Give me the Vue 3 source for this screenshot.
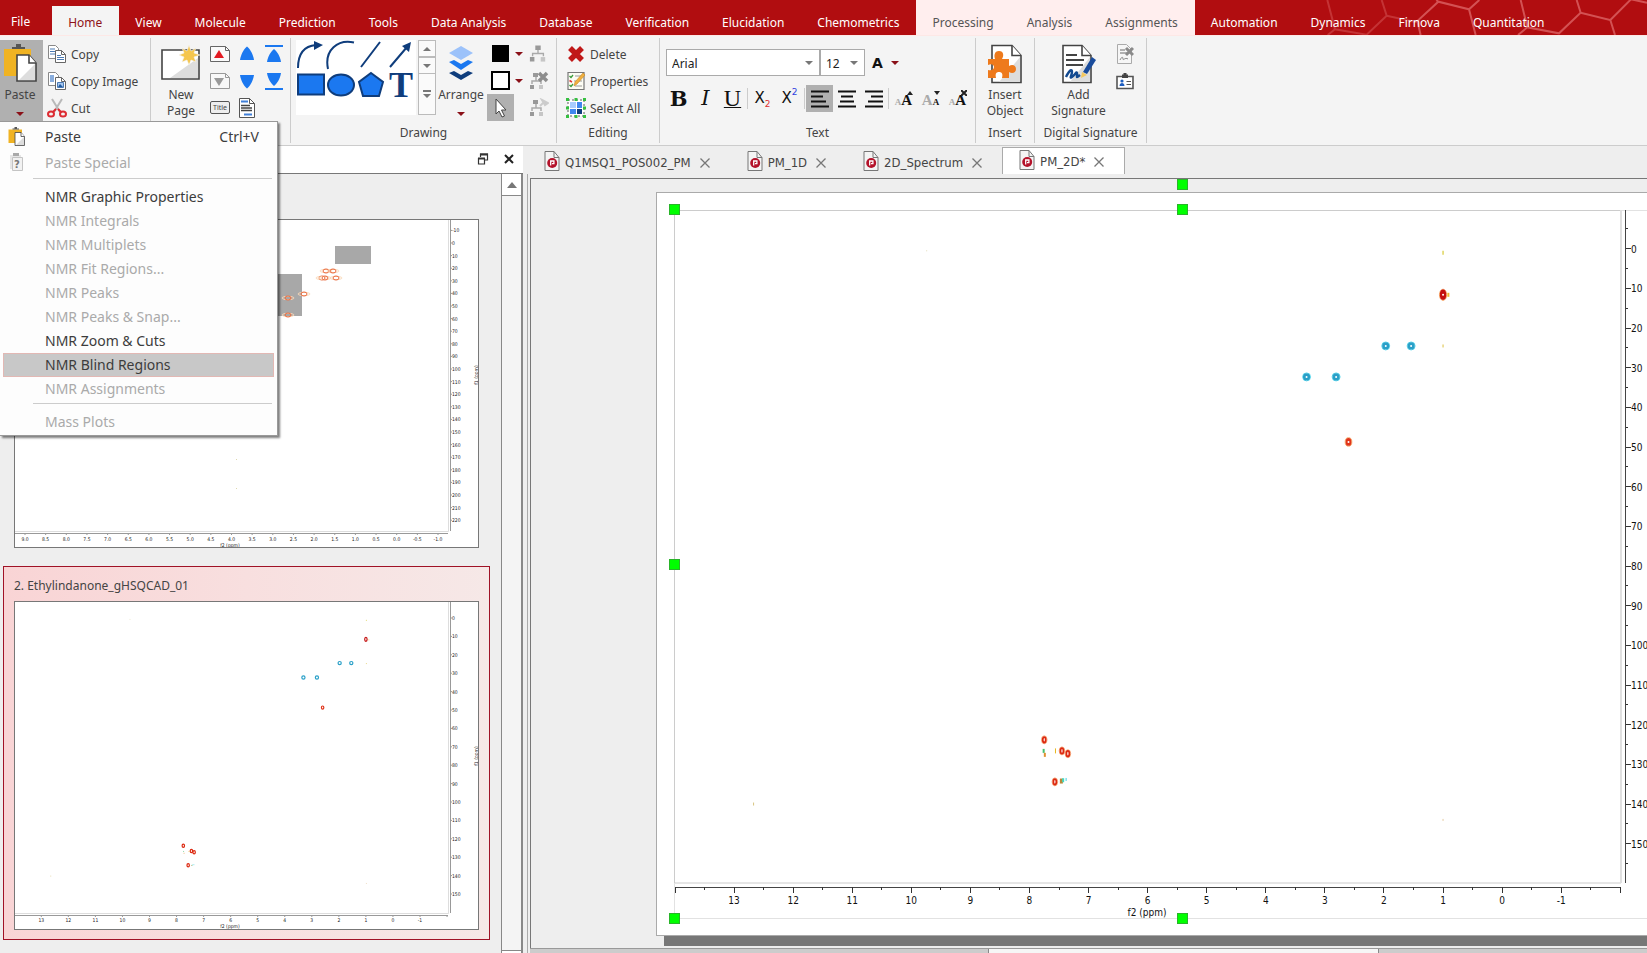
<script setup>
import { ref } from 'vue'

const mainTabs = [
  { name: 'File', kind: 'file' },
  { name: 'Home', kind: 'active' },
  { name: 'View' },
  { name: 'Molecule' },
  { name: 'Prediction' },
  { name: 'Tools' },
  { name: 'Data Analysis' },
  { name: 'Database' },
  { name: 'Verification' },
  { name: 'Elucidation' },
  { name: 'Chemometrics' },
  { name: 'Processing', kind: 'context' },
  { name: 'Analysis', kind: 'context' },
  { name: 'Assignments', kind: 'context' },
  { name: 'Automation' },
  { name: 'Dynamics' },
  { name: 'Firnova' },
  { name: 'Quantitation' },
]

const menu = [
  { name: 'Paste', key: 'Ctrl+V', icon: 'paste', on: true },
  { name: 'Paste Special', icon: 'special' },
  { line: true },
  { name: 'NMR Graphic Properties', on: true },
  { name: 'NMR Integrals' },
  { name: 'NMR Multiplets' },
  { name: 'NMR Fit Regions...' },
  { name: 'NMR Peaks' },
  { name: 'NMR Peaks & Snap...' },
  { name: 'NMR Zoom & Cuts', on: true },
  { name: 'NMR Blind Regions', on: true, hot: true },
  { name: 'NMR Assignments' },
  { line: true },
  { name: 'Mass Plots' },
]

const docs = ref([
  { name: 'Q1MSQ1_POS002_PM' },
  { name: 'PM_1D' },
  { name: '2D_Spectrum' },
  { name: 'PM_2D*', active: true },
])

const range = (from, to, step) => {
  const out = []
  for (let v = from; v <= to + 0.001; v += step) out.push(Math.round(v * 100) / 100)
  return out
}

// Peaks of the HSQC spectrum, in ppm: f2 across, f1 down.
const peaks = [
  { f2: 1.0, f1: 11.6, kind: 'strong' },
  { f2: 1.97, f1: 24.5, kind: 'neg' },
  { f2: 1.54, f1: 24.5, kind: 'neg' },
  { f2: 3.31, f1: 32.3, kind: 'neg' },
  { f2: 2.81, f1: 32.3, kind: 'neg' },
  { f2: 2.6, f1: 48.7, kind: 'pos' },
  { f2: 7.75, f1: 123.8, kind: 'open' },
  { f2: 7.45, f1: 126.6, kind: 'open' },
  { f2: 7.35, f1: 127.3, kind: 'open' },
  { f2: 7.57, f1: 134.4, kind: 'open' },
]
const specks = [
  { f2: 1.0, f1: 1, w: 1, h: 4, c: '#d0c010' },
  { f2: 0.91, f1: 11.6, w: 2, h: 4, c: '#f0b830' },
  { f2: 1.0, f1: 24.5, w: 1, h: 3, c: '#dcc040' },
  { f2: 7.76, f1: 126.6, w: 2, h: 4, c: '#48c070' },
  { f2: 7.74, f1: 127.6, w: 2, h: 4, c: '#e09030' },
  { f2: 7.56, f1: 126.6, w: 1, h: 5, c: '#e8b820' },
  { f2: 7.46, f1: 134.2, w: 3, h: 5, c: '#b88838' },
  { f2: 7.43, f1: 134.0, w: 2, h: 4, c: '#40d8c0' },
  { f2: 7.38, f1: 133.8, w: 1, h: 3, c: '#40d0e4' },
  { f2: 12.67, f1: 140, w: 1, h: 3, c: '#d8c480' },
  { f2: 1.0, f1: 144, w: 1, h: 2, c: '#e4c9a0' },
  { f2: 9.74, f1: 0.5, w: 1, h: 1, c: '#e2dcb8' },
]
const X = (p) => 18 + (14 - p) * 59.08
const Y = (p) => 55.8 + p * 39.66 / 10
// Centre of the device pixel that holds a coordinate, for crisp hairlines.
const snap = (v) => Math.floor(v) + 0.5
const tx = (p) => 27.3 + (13 - p) * 27.05
const ty = (p) => 17 + p * 1.84
const ux = (p) => 10 + (9 - p) * 41.3
const uy = (p) => 23 + p * 1.26

const radii = { strong: [2.6, 4.6], neg: [3, 3], pos: [2.3, 3.3], open: [1.8, 3] }
const hues = { strong: '#c41010', neg: '#2aa0c8', pos: '#e0341a', open: '#dc2810' }
const rims = { strong: '#f6a060', neg: '#60dcf0', pos: '#f8a868', open: '#f8b080' }

const handles = ['h-rot', 'h-nw', 'h-n', 'h-w', 'h-sw', 'h-s']
const font = ref('Arial')
const size = ref('12')
</script>

<template>
  <div class="app">
    <svg class="defs" width="0" height="0" aria-hidden="true">
      <defs>
        <symbol id="i-paste" viewBox="0 0 34 38">
          <path d="M1 5h27v27H1z" fill="#f0b323" />
          <path d="M9 5V3h4V0h5v3h4v2z" fill="#555" />
          <path d="M14 11h12l7 8v18H14z" fill="#fff" stroke="#444" stroke-width="1.6" />
          <path d="M32 20v16H16z" fill="#ddd" />
          <path d="M26 11v8h7" fill="#fff" stroke="#444" stroke-width="1.6" />
        </symbol>
        <symbol id="i-doc" viewBox="0 0 16 20">
          <path d="M1 .5h9l5 6v13H1z" fill="#f4f4f4" stroke="#777" />
          <path d="M10 .5v6h5" fill="none" stroke="#777" />
          <circle cx="8.200" cy="12" r="5" fill="#b4122a" />
          <path d="M6.700 14.600V10h3.200v2.600H8" fill="none" stroke="#fff" stroke-width="1.3" />
        </symbol>
        <symbol id="i-tree" viewBox="0 0 20 20">
          <path d="M7 1h6v5H7zM1 14h5v5H1z" fill="#999" />
          <path d="M13 14h5v5h-5z" fill="#c6c6c6" />
          <path d="M10 6v4M4 13v-3h12v3" fill="none" stroke="#aaa" stroke-width="1.500" />
        </symbol>
      </defs>
    </svg>

    <header class="titlebar">
      <svg class="hexes" viewBox="570 0 981 105" fill="none" stroke="#e87c7c" stroke-width="6" aria-hidden="true">
        <g opacity=".35"><path d="M592 0l23 88 95 16 60-57-15-47M615 88l-22 17M770 47l90 20" /></g>
        <g opacity=".62"><path d="M872 105l-10-42 63-58 92 23 31-28M925 5l-6-5M1017 28l20 77M1172 0l20 82 95 18 65-62-12-38M1192 82l-28 23M1352 38l89 22 14 45M1441 60l62-62 48 10" /></g>
      </svg>
      <nav class="tabs">
        <button v-for="t in mainTabs" :key="t.name" :class="['tab', t.kind]">{{ t.name }}</button>
      </nav>
    </header>

    <section class="ribbon">
      <div class="group g-clip">
        <div class="body">
          <button class="big paste">
            <span class="pic"><svg width="34" height="38"><use href="#i-paste" /></svg></span>
            <span>Paste</span>
            <i class="drop"></i>
          </button>
          <div class="stack">
            <button class="row">
              <svg width="20" height="20" viewBox="0 0 20 20"><path d="M1.500 1.500h7l3 3v10h-10z" fill="#fff" stroke="#888" /><path d="M3 5h5M3 7.500h5M3 10h5" stroke="#4a7ab5" /><path d="M8.500 6.500h6l4 4v8h-10z" fill="#fff" stroke="#666" /><path d="M14.500 6.500v4h4" fill="none" stroke="#666" /><path d="M10 11.500h4M10 13.500h7M10 15.500h7" stroke="#4a7ab5" /></svg>
              <span>Copy</span>
            </button>
            <button class="row">
              <svg width="20" height="20" viewBox="0 0 20 20"><path d="M1.500 1.500h7l3 3v10h-10z" fill="#fff" stroke="#888" /><path d="M3 4h4v7H3z" fill="#8aaede" /><path d="M8.500 6.500h6l4 4v8h-10z" fill="#fff" stroke="#666" /><path d="M14.500 6.500v4h4" fill="none" stroke="#666" /><path d="M10.500 11.500h6v5h-6z" fill="#a8c8f0" stroke="#4a7ab5" /><path d="M11 16l2-3 3 3z" fill="#1f5aa0" /></svg>
              <span>Copy Image</span>
            </button>
            <button class="row">
              <svg width="20" height="20" viewBox="0 0 20 20" fill="none"><path d="M5 1l8 13M15 1L7 14" stroke="#b9b9b9" stroke-width="2" /><ellipse cx="4" cy="16" rx="3" ry="2.600" stroke="#dd2c33" stroke-width="2" /><ellipse cx="16" cy="16" rx="3" ry="2.600" stroke="#dd2c33" stroke-width="2" /><path d="M6 14l3-3M14 14l-3-3" stroke="#dd2c33" stroke-width="2" /></svg>
              <span>Cut</span>
            </button>
          </div>
        </div>
        <div class="label"></div>
      </div>

      <div class="group g-pages">
        <div class="body">
          <button class="big newpage">
            <span class="pic">
              <svg width="40" height="38" viewBox="0 0 40 38"><path d="M1 6h37v29H1z" fill="#fff" stroke="#444" stroke-width="1.600" /><path d="M37 14v20H9z" fill="#ddd" /><path d="M28 1l2 6 5-3-2 5 6 2-6 2 2 5-5-2-2 5-2-5-5 2 2-5-5-2 5-2-2-5 5 3z" fill="#f5c64e" stroke="#f4f4f4" stroke-width=".6" /></svg>
            </span>
            <span>New<br />Page</span>
          </button>
          <div class="pagegrid">
            <button aria-label="Page up"><svg width="20" height="18" viewBox="0 0 20 18"><path d="M.5 1.500h15l4 4v11H.5z" fill="#fafafa" stroke="#666" /><path d="M15.500 1.500v4h4" fill="none" stroke="#666" /><path d="M4 13L9 5l5 8z" fill="#e31b23" /></svg></button>
            <button aria-label="Move up"><svg width="18" height="18" viewBox="0 0 18 18"><path d="M9 1.500C11 3 15 8 16 15H2C3 8 7 3 9 1.500z" fill="#1b78f0" /></svg></button>
            <button aria-label="Move to top"><svg width="18" height="18" viewBox="0 0 18 18"><path d="M0 1h18" stroke="#1b78f0" stroke-width="2" /><path d="M9 4c2 1.500 6 6 7 13H2C3 10 7 5.500 9 4z" fill="#1b78f0" /></svg></button>
            <button aria-label="Page down"><svg width="20" height="18" viewBox="0 0 20 18"><path d="M.5 1.500h15l4 4v11H.5z" fill="#f8f8f8" stroke="#999" /><path d="M15.500 1.500v4h4" fill="none" stroke="#999" /><path d="M4 6l5 8 5-8z" fill="#999" /></svg></button>
            <button aria-label="Move down"><svg width="18" height="18" viewBox="0 0 18 18"><path d="M9 16.500C11 15 15 10 16 3H2c1 7 5 12 7 13.500z" fill="#1b78f0" /></svg></button>
            <button aria-label="Move to bottom"><svg width="18" height="18" viewBox="0 0 18 18"><path d="M0 17h18" stroke="#1b78f0" stroke-width="2" /><path d="M9 14c2-1.500 6-6 7-13H2c1 7 5 11.500 7 13z" fill="#1b78f0" /></svg></button>
            <button aria-label="Page title" class="titlebtn">Title</button>
            <button aria-label="Header and footer"><svg width="18" height="20" viewBox="0 0 18 20"><path d="M1.500.5h10l5 5v14h-15z" fill="#fff" stroke="#555" /><path d="M11.500.5v5h5" fill="none" stroke="#555" /><path d="M3 3.500h7M6 16.500h8" stroke="#3f7fd8" stroke-width="2" /><path d="M3 7.500h9M3 10h11M3 12.500h11" stroke="#444" stroke-width="1.300" /></svg></button>
          </div>
        </div>
        <div class="label"></div>
      </div>

      <div class="group g-draw">
        <div class="body">
          <svg class="gallery" width="120" height="75" viewBox="0 0 120 75" aria-label="Shapes">
            <path d="M0 0h120v75H0z" fill="#fff" />
            <g fill="none" stroke="#0f3d7c" stroke-width="2"><path d="M2 28C2 14 8 6 20 5M32 29C28 10 42-1 58 2.500M65 27L84 2M94 27l17-20" /></g>
            <path d="M18 1l9 4-9 5zM115 2l-2 10-7-6z" fill="#0f3d7c" />
            <g fill="#1b78f0" stroke="#0f3d7c" stroke-width="2"><path d="M2 34.500h26v20H2z" /><ellipse cx="45" cy="45" rx="13" ry="10.500" /><path d="M75 33l12 9-4 14H67l-4-14z" /></g>
            <text x="105" y="57" class="glyph-t" text-anchor="middle">T</text>
          </svg>
          <div class="gscroll">
            <button aria-label="Scroll up"><i class="tri up"></i></button>
            <button aria-label="Scroll down"><i class="tri"></i></button>
            <button aria-label="More shapes" class="more"><i class="dash"></i><i class="tri"></i></button>
          </div>
          <button class="big arrange">
            <span class="pic"><svg width="26" height="38" viewBox="0 0 26 38"><path d="M1 9l12-7 12 7-12 7z" fill="#9cc2fa" /><path d="M1 18l5-2 7 4 7-4 5 2-12 8z" fill="#1b78f0" /><path d="M1 29l5-2 7 4 7-4 5 2-12 7z" fill="#0f3d7c" /></svg></span>
            <span>Arrange</span>
            <i class="drop"></i>
          </button>
          <div class="colours">
            <button aria-label="Fill colour"><b class="sw fill"></b><i class="drop"></i></button>
            <button aria-label="Line colour"><b class="sw line"></b><i class="drop"></i></button>
            <button aria-label="Select" class="pointer"><svg width="14" height="20" viewBox="0 0 14 20"><path d="M2 1v15l3-3 3 6 2.500-1-3-6H12z" fill="#fff" stroke="#444" /></svg></button>
          </div>
          <div class="stack trees">
            <button aria-label="Group"><svg width="18" height="19"><use href="#i-tree" /></svg></button>
            <button aria-label="Ungroup"><svg width="20" height="20" viewBox="0 0 20 20"><path d="M4 2h5v4H4zM1 14h4v4H1z" fill="#999" /><path d="M10 14h4v4h-4z" fill="#c6c6c6" /><path d="M7 6v4M3 13v-3h9v3" fill="none" stroke="#aaa" stroke-width="1.500" /><path d="M10 2l8 8M18 2l-8 8" stroke="#8d8d8d" stroke-width="3.500" /></svg></button>
            <button aria-label="Edit group"><svg width="20" height="20" viewBox="0 0 20 20"><path d="M4 2h5v4H4zM1 14h4v4H1z" fill="#999" /><path d="M10 14h4v4h-4z" fill="#c6c6c6" /><path d="M7 6v4M3 13v-3h9v3" fill="none" stroke="#aaa" stroke-width="1.500" /><path d="M11 8l4-4M13 2l6 3-3 2z" stroke="#ccc" stroke-width="2" fill="#ccc" /></svg></button>
          </div>
        </div>
        <div class="label">Drawing</div>
      </div>

      <div class="group g-edit">
        <div class="body">
          <div class="stack">
            <button class="row"><svg width="20" height="20" viewBox="0 0 20 20"><path d="M4 4l12 12M16 4L4 16" stroke="#c01818" stroke-width="5.500" /></svg><span>Delete</span></button>
            <button class="row"><svg width="20" height="20" viewBox="0 0 20 20"><path d="M2 1.500h16v17H2z" fill="#fcfcf4" stroke="#777" stroke-width="1.200" /><path d="M3.500 5l1.500 1.500L7 4M3.500 14l1.500 1.500L7 13" stroke="#3a9c3a" fill="none" stroke-width="1.300" /><path d="M3.500 9.500L6 11" stroke="#d33" stroke-width="1.500" /><path d="M9 5h7M8 10h8M9 15h7" stroke="#999" /><path d="M8 15l1-4 8-9 2 2-8 9z" fill="#f0b040" stroke="#c98a20" stroke-width=".6" /></svg><span>Properties</span></button>
            <button class="row"><svg width="20" height="20" viewBox="0 0 20 20"><path d="M2 2h16v16H2z" fill="#fff" stroke="#5a5a5a" stroke-dasharray="2 2" /><g fill="#35c040"><path d="M0 0h3v3H0zM17 0h3v3h-3zM0 17h3v3H0zM17 17h3v3h-3zM8.500 0h3v3h-3zM8.500 17h3v3h-3zM0 8.500h3v3H0zM17 8.500h3v3h-3z" /></g><path d="M4 4h6v6H4z" fill="#a8ccff" /><path d="M11 4h5v6h-5zM4 11h6v5H4z" fill="#3f87ee" /><path d="M11 11h5v5h-5z" fill="#0f3d7c" /></svg><span>Select All</span></button>
          </div>
        </div>
        <div class="label">Editing</div>
      </div>

      <div class="group g-text">
        <div class="body textbody">
          <div class="fontrow">
            <label class="pick family"><select v-model="font" aria-label="Font"><option>Arial</option></select><i class="tri"></i></label>
            <label class="pick pts"><select v-model="size" aria-label="Font size"><option>12</option></select><i class="tri"></i></label>
            <button class="fontcolour" aria-label="Font colour"><b>A</b><i class="drop"></i></button>
          </div>
          <div class="fmtrow">
            <button class="f bold" aria-label="Bold">B</button>
            <button class="f ital" aria-label="Italic">I</button>
            <button class="f und" aria-label="Underline">U</button>
            <i class="bar"></i>
            <button class="f subs" aria-label="Subscript">X<sub>2</sub></button>
            <button class="f sups" aria-label="Superscript">X<sup>2</sup></button>
            <i class="bar"></i>
            <button class="f on" aria-label="Align left"><svg width="18" height="18" viewBox="0 0 18 18"><path d="M0 1.500h18M0 6.500h12M0 11.500h15M0 16.500h18" stroke="#111" stroke-width="2.200" /></svg></button>
            <button class="f" aria-label="Align centre"><svg width="18" height="18" viewBox="0 0 18 18"><path d="M0 1.500h18M3 6.500h12M2 11.500h14M0 16.500h18" stroke="#111" stroke-width="2.200" /></svg></button>
            <button class="f" aria-label="Align right"><svg width="18" height="18" viewBox="0 0 18 18"><path d="M0 1.500h18M6 6.500h12M3 11.500h15M0 16.500h18" stroke="#111" stroke-width="2.200" /></svg></button>
            <i class="bar"></i>
            <button class="f aa" aria-label="Grow font"><span class="dim small">A</span><span class="large">A</span><svg width="6" height="6" viewBox="0 0 6 6"><path d="M0 5l3-4 3 4z" fill="#222" /></svg></button>
            <button class="f aa" aria-label="Shrink font"><span class="dim large">A</span><span class="small">A</span><svg width="6" height="6" viewBox="0 0 6 6"><path d="M0 1l3 4 3-4z" fill="#222" /></svg></button>
            <button class="f aa" aria-label="Reset font"><span class="dim small">A</span><span class="large">A</span><svg width="6" height="6" viewBox="0 0 6 6"><path d="M0 0l6 6M6 0L0 6" stroke="#222" stroke-width="2" /></svg></button>
          </div>
        </div>
        <div class="label">Text</div>
      </div>

      <div class="group g-insert">
        <div class="body">
          <button class="big">
            <span class="pic"><svg width="36" height="40" viewBox="0 0 36 40"><path d="M5 1.500h20l9 10v27H5z" fill="#fff" stroke="#444" stroke-width="1.600" /><path d="M33 13v25H12z" fill="#ddd" /><path d="M25 1.500v10h9" fill="#fff" stroke="#444" stroke-width="1.600" /><path d="M1 15h7c-1-3-1-8 4-8s5 5 3 8h7v7c3-2 7-1 7 3s-4 5-7 3v6h-7c1-4 0-6-3-6s-4 2-3 6H1v-8c4 1 6-1 6-3s-2-4-6-2z" fill="#ee7a1c" /></svg></span>
            <span>Insert<br />Object</span>
          </button>
        </div>
        <div class="label">Insert</div>
      </div>

      <div class="group g-sign">
        <div class="body">
          <button class="big">
            <span class="pic"><svg width="36" height="40" viewBox="0 0 36 40"><path d="M2 1.500h19l9 10v27H2z" fill="#fff" stroke="#444" stroke-width="1.600" /><path d="M29 13v25H9z" fill="#ddd" /><path d="M21 1.500v10h9" fill="#fff" stroke="#444" stroke-width="1.600" /><path d="M5 11h11M5 16h18M5 21h17" stroke="#444" stroke-width="2" /><path d="M5 33c4-8 6-8 6-5s-3 7 0 5 5-7 5-3-1 4 3 1" fill="none" stroke="#134a90" stroke-width="2.400" /><path d="M22 28l9-15 4 3-9 14z" fill="#1a4c9c" /><path d="M20 34l1-6 5 3z" fill="#f4c860" /></svg></span>
            <span>Add<br />Signature</span>
          </button>
          <div class="stack signs">
            <button aria-label="Remove signature"><svg width="18" height="20" viewBox="0 0 18 20"><path d="M1.500.5h9l5 5v14h-14z" fill="#f6f6f6" stroke="#aaa" /><path d="M4 6h5M4 9h7" stroke="#999" stroke-width="1.500" /><path d="M4 16c2-4 3-3 3-1s2-2 5 0" fill="none" stroke="#888" /><path d="M10 4l7 7M17 4l-7 7" stroke="#8a8a8a" stroke-width="3" /></svg></button>
            <button aria-label="Signature details"><svg width="18" height="18" viewBox="0 0 18 18"><path d="M1 4.500h16v12H1z" fill="#fff" stroke="#555" stroke-width="1.600" /><path d="M6 6V2.500h1.500V1h3v1.500H12V6z" fill="#444" /><circle cx="6" cy="9" r="1.600" fill="#1f5fc0" /><path d="M3.500 14c0-4 5-4 5 0z" fill="#1f5fc0" /><path d="M10.500 9.500H15M10.500 12.500H15" stroke="#555" /></svg></button>
          </div>
        </div>
        <div class="label">Digital Signature</div>
      </div>
    </section>

    <main class="work">
      <aside class="pages">
        <div class="phead">
          <button aria-label="Float panel"><svg width="12" height="12" viewBox="0 0 12 12" fill="none" stroke="#333"><path d="M3.500 4V1h7v6H8" stroke-width="1.200" /><path d="M3 1.500h8M1 5.500h7" stroke-width="2.200" /><path d="M1.500 5v6h6V5" stroke-width="1.200" /></svg></button>
          <button aria-label="Close panel"><svg width="12" height="12" viewBox="0 0 12 12"><path d="M2 2l8 8M10 2l-8 8" stroke="#222" stroke-width="2" /></svg></button>
        </div>
        <div class="plist">
          <div class="cards">
            <article class="card">
              <h3></h3>
              <svg class="thumb" viewBox="0 0 463 327">
                <g fill="#a8a8a8"><path d="M320 26h36v18h-36zM240 54h47v42h-47z" /></g>
                <g fill="none" stroke="#ea6a3e">
                  <g v-for="(p, i) in [[311,51],[318,51],[307,58],[310,58],[321,58],[289,74],[273,78],[273,95]]" :key="i">
                    <ellipse :cx="p[0]" :cy="p[1]" rx="6" ry="1.600" stroke="#fbd9b8" />
                    <ellipse :cx="p[0]" :cy="p[1]" rx="3" ry="2" />
                  </g>
                </g>
                <path d="M221 239h1v1h-1zM221 268h1v1h-1z" fill="#ddd8ae" />
                <path class="soft" d="M433.500 0v311.500H0" />
                <path class="ax" d="M435.500 0v311M0 313.500h433" />
                <g v-for="v in range(-10, 225, 5)" :key="'y' + v">
                  <path class="ax" :d="`M435 ${uy(v)}h${v % 10 ? 1 : 2}`" />
                  <text v-if="v % 10 === 0" class="tiny" x="437" :y="uy(v) + 2">{{ v }}</text>
                </g>
                <g v-for="v in range(-1, 9, 0.5)" :key="'x' + v">
                  <path class="ax" :d="`M${ux(v)} 313v2`" />
                  <text class="tiny" text-anchor="middle" :x="ux(v)" y="321">{{ v.toFixed(1) }}</text>
                </g>
                <text class="tiny" text-anchor="middle" x="215" y="327">f2 (ppm)</text>
                <text class="tiny" text-anchor="middle" transform="translate(463 155) rotate(-90)">f1 (ppm)</text>
              </svg>
            </article>
            <article class="card sel">
              <h3>2. Ethylindanone_gHSQCAD_01</h3>
              <svg class="thumb" viewBox="0 0 463 327">
                <ellipse v-for="(p, i) in peaks" :key="i" :cx="tx(p.f2) - 1" :cy="ty(p.f1) - 1" :rx="p.kind === 'neg' ? 1.6 : 1.2" :ry="p.kind === 'strong' ? 2 : 1.6" fill="none" :stroke="hues[p.kind]" stroke-width="1.2" />
                <rect v-for="(s, i) in specks" :key="'s' + i" :x="tx(s.f2) - 1" :y="ty(s.f1) - 1" width="1" height="1" :fill="s.c" opacity=".6" />
                <path class="soft" d="M433.500 0v311.500H0" />
                <path class="ax" d="M435.500 0v311M0 313.500h433" />
                <g v-for="v in range(-5, 155, 5)" :key="'y' + v">
                  <path class="ax" :d="`M435 ${ty(v) - 1}h${v % 10 ? 1 : 2}`" />
                  <text v-if="v % 10 === 0" class="tiny" x="437" :y="ty(v) + 1">{{ v }}</text>
                </g>
                <g v-for="v in range(-2, 13.5, 0.5)" :key="'x' + v">
                  <path class="ax" :d="`M${tx(v) - 1} 313v${v % 1 ? 1 : 2}`" />
                  <text v-if="v % 1 === 0 && v > -2" class="tiny" text-anchor="middle" :x="tx(v) - 1" y="320">{{ v }}</text>
                </g>
                <text class="tiny" text-anchor="middle" x="215" y="326">f2 (ppm)</text>
                <text class="tiny" text-anchor="middle" transform="translate(463 154) rotate(-90)">f1 (ppm)</text>
              </svg>
            </article>
          </div>
          <div class="vbar">
            <button aria-label="Scroll pages up"><i class="tri up"></i></button>
            <div class="track"></div>
            <div class="foot"></div>
          </div>
        </div>
      </aside>
      <div class="splitter"></div>

      <section class="docs">
        <div class="doctabs">
          <div v-for="d in docs" :key="d.name" :class="['doctab', { active: d.active }]">
            <svg width="16" height="20"><use href="#i-doc" /></svg>
            <span>{{ d.name }}</span>
            <button :aria-label="'Close ' + d.name"><svg width="10" height="10" viewBox="0 0 10 10"><path d="M.5.5l9 9M9.500.5l-9 9" stroke="#777" stroke-width="1.300" /></svg></button>
          </div>
        </div>
        <div class="canvas">
          <div class="sheet">
            <svg class="plot" width="1020" height="742" viewBox="0 0 1020 742">
              <path class="frame" d="M17.500 17.500h946.500v672.500H17.500z" />
              <path class="frame pale" d="M17.500 690v35.500H1020M964 17.500h56" />
              <path class="edge" d="M964 17v673" />
              <path class="axis" d="M18 694.500h946M968.500 17v673" />
              <g v-for="v in range(-2, 14, 0.5)" :key="'x' + v">
                <path class="tick" :d="`M${snap(X(v))} 694v${v % 1 ? 3 : 6}`" />
                <text v-if="v % 1 === 0 && v > -2 && v < 14" text-anchor="middle" :x="X(v)" y="711">{{ v }}</text>
              </g>
              <g v-for="v in range(-5, 155, 5)" :key="'y' + v">
                <path class="tick" :d="`M969 ${snap(Y(v))}h${v % 10 ? 2 : 5}`" />
                <text v-if="v % 10 === 0" x="974" :y="Y(v) + 4">{{ v }}</text>
              </g>
              <text text-anchor="middle" x="490" y="723">f2 (ppm)</text>
              <g v-for="(p, i) in peaks" :key="'p' + i">
                <ellipse :cx="X(p.f2)" :cy="Y(p.f1)" :rx="radii[p.kind][0] + 1" :ry="radii[p.kind][1] + 1" fill="none" :stroke="rims[p.kind]" stroke-width="1" />
                <ellipse :cx="X(p.f2)" :cy="Y(p.f1)" :rx="radii[p.kind][0] - 0.3" :ry="radii[p.kind][1] - 0.3" :fill="p.kind === 'open' ? '#fff' : hues[p.kind]" :stroke="hues[p.kind]" stroke-width="1.8" />
                <circle v-if="p.kind !== 'open'" :cx="X(p.f2)" :cy="Y(p.f1)" r="1" fill="#fff" />
              </g>
              <rect v-for="(s, i) in specks" :key="'s' + i" :x="X(s.f2) - s.w / 2" :y="Y(s.f1) - s.h / 2" :width="s.w" :height="s.h" :fill="s.c" />
            </svg>
            <i v-for="h in handles" :key="h" :class="['handle', h]"></i>
          </div>
          <div class="shade"></div>
        </div>
        <div class="hbar"><div class="thumbbar"></div></div>
      </section>
    </main>

    <div class="menu" role="menu">
      <template v-for="(m, i) in menu" :key="i">
        <hr v-if="m.line" />
        <button v-else role="menuitem" :class="['item', { off: !m.on, hot: m.hot, tall: m.icon }]">
          <svg v-if="m.icon === 'paste'" class="mi" width="17" height="19"><use href="#i-paste" /></svg>
          <svg v-else-if="m.icon" class="mi" width="17" height="19" viewBox="0 0 17 19"><path d="M2 2h11v14H2z" fill="#e6e6e6" /><path d="M5 0h6v3H5z" fill="#aaa" /><path d="M4.500 4.500h10v13h-10z" fill="#f2f2f2" stroke="#c4c4c4" /><text x="9" y="15" text-anchor="middle" class="q">?</text></svg>
          <span>{{ m.name }}</span>
          <kbd v-if="m.key">{{ m.key }}</kbd>
        </button>
      </template>
    </div>
  </div>
</template>

<style>
html, body { background: #eee; overflow: hidden; }
</style>

<style scoped>
.app {
  position: relative; height: 100vh; display: flex; flex-direction: column; overflow: hidden;
  font: 12px/16px "Noto Sans", "Open Sans", sans-serif; color: #444; background: #eee;
}
.app *, .app *::before { box-sizing: border-box; }
.defs { position: absolute; }
button { font: inherit; color: inherit; background: none; border: 0; padding: 0; margin: 0; }
svg { display: block; flex: none; }

.titlebar { position: relative; height: 35px; flex: none; background: #b10d10; overflow: hidden; }
.hexes { position: absolute; right: 0; top: 0; width: 327px; height: 35px; }
.tabs { position: relative; display: flex; height: 35px; }
.tab { flex: none; padding: 11px 17px 0 16px; color: #fff; white-space: nowrap; }
.tab.file { padding: 8px 22px 0 11px; }
.tab.active { margin-top: 6px; padding-top: 5px; background: #f4f4f4; color: #8e1218; }
.tab.context { background: #ffeeee; color: #555; }

.ribbon { display: flex; flex: none; height: 111px; background: #f4f4f4; border-top: 1px solid #fde8e6; border-bottom: 1px solid #ccc; }
.group { flex: none; margin: 2px 0; border-right: 1px solid #ccc; display: flex; flex-direction: column; }
.body { flex: 1; display: flex; padding-top: 2px; }
.label { height: 22px; line-height: 24px; text-align: center; white-space: nowrap; }
.g-clip { width: 151px; }
.g-pages { width: 140px; }
.g-draw { width: 266px; }
.g-edit { width: 103px; }
.g-text { width: 316px; }
.g-insert { width: 59px; }
.g-sign { width: 112px; }

.big { display: flex; flex-direction: column; align-items: center; height: 81px; text-align: center; }
.big .pic { height: 47px; padding-top: 4px; }
.big .drop { margin-top: 9px; }
.paste { width: 43px; background: #b0b0b0; padding-right: 3px; }
.newpage { width: 50px; margin-left: 5px; }
.drop { width: 0; height: 0; border: 4px solid transparent; border-top-color: #8a1018; border-bottom: 0; }
.tri { width: 0; height: 0; border: 4px solid transparent; border-top-color: #777; border-bottom: 0; }
.tri.up { border: 4px solid transparent; border-bottom-color: #777; border-top: 0; }

.stack { display: flex; flex-direction: column; }
.stack button { height: 27px; display: flex; align-items: center; gap: 4px; white-space: nowrap; }
.row span { padding-top: 2px; }
.g-clip .stack { padding-left: 4px; }
.g-edit .stack { padding-left: 9px; }

.pagegrid { display: grid; grid-template-columns: 27px 27px 27px; grid-auto-rows: 27px; }
.pagegrid button { display: flex; align-items: center; justify-content: center; }
.pagegrid .titlebtn { width: 20px; height: 13px; margin: 7px 0 0 4px; border: 1px solid #555; border-radius: 2px; background: #eee; font-size: 7px; line-height: 10px; }

.gallery { margin-left: 5px; }
.glyph-t { font: bold 36px "Liberation Serif", serif; fill: #0f3d7c; }
.gscroll { width: 18px; height: 75px; margin-left: 2px; display: flex; flex-direction: column; }
.gscroll button { height: 17px; border: 1px solid #bbb; background: #fafafa; display: flex; flex-direction: column; align-items: center; justify-content: center; gap: 2px; }
.gscroll .more { flex: 1; border-top: 0; }
.dash { width: 8px; height: 2px; background: #777; }
.arrange { width: 50px; }
.colours { width: 41px; margin-left: 1px; }
.colours button { height: 27px; display: flex; align-items: center; padding-left: 4px; gap: 5px; }
.colours .pointer { width: 27px; background: #b0b0b0; padding-left: 7px; }
.sw { width: 19px; height: 19px; border: 2px solid #000; background: #fff; }
.sw.fill { background: #000; width: 17px; height: 17px; margin: 0 1px; }
.trees { padding-left: 1px; }

.textbody { flex-direction: column; }
.fontrow { display: flex; padding: 9px 0 0 6px; height: 45px; }
.pick { position: relative; height: 27px; border: 1px solid #aaa; background: #fff; }
.pick select { width: 100%; height: 27px; padding: 0 5px; border: 0; appearance: none; background: none; font: inherit; color: #222; }
.pick .tri { position: absolute; right: 6px; top: 11px; }
.family { width: 154px; }
.pts { width: 45px; }
.fontcolour { display: flex; align-items: center; gap: 8px; height: 27px; padding-left: 7px; }
.fontcolour b { font: bold 14px/16px "DejaVu Sans", sans-serif; color: #111; }
.fmtrow { display: flex; height: 27px; padding-left: 5px; align-items: center; }
.f { width: 27px; height: 27px; display: flex; align-items: center; justify-content: center; color: #111; }
.bold, .ital { font: 21px/27px "DejaVu Serif", serif; }
.und { font: 24px/27px "Liberation Serif", serif; }
.bold { font-weight: bold; }
.ital { font-style: italic; }
.und { text-decoration: underline; text-decoration-thickness: 1px; }
.subs, .sups { font: 15px/27px "DejaVu Sans", sans-serif; }
.subs sub, .sups sup { font-size: 9px; line-height: 9px; }
.subs sub { color: #e03030; align-self: flex-end; margin-bottom: 3px; }
.sups sup { color: #3040e0; align-self: flex-start; margin-top: 3px; }
.f.on { background: #b0b0b0; }
.bar { width: 1px; height: 21px; margin: 0 1px; background: #ccc; }
.aa { font: bold 14px/16px "Liberation Serif", serif; position: relative; align-items: baseline; padding-top: 7px; }
.aa .small { font-size: 9px; }
.aa .large { font-size: 15px; }
.aa .dim { color: #aaa; }
.aa svg { position: absolute; right: 4px; top: 5px; }

.g-insert .big { width: 58px; }
.g-sign .big { width: 75px; margin-left: 6px; }

.work { flex: 1; min-height: 0; display: flex; }
.pages { flex: none; width: 523px; display: flex; flex-direction: column; }
.phead { height: 28px; background: #fff; border-bottom: 1px solid #777; display: flex; justify-content: flex-end; align-items: center; gap: 14px; padding: 0 8px 2px 0; }
.plist { flex: 1; min-height: 0; display: flex; border-right: 2px solid #888; }
.cards { flex: 1; padding: 10px 11px 0 3px; display: flex; flex-direction: column; gap: 8px; overflow: hidden; }
.card { flex: none; border: 1px solid transparent; padding: 0 10px 9px; }
.card.sel { border-color: #a01226; background: linear-gradient(90deg, #f9d4d5, #f8dfdf 50%, #f6e8e7); }
.card h3 { margin: 0; height: 34px; padding-top: 5px; font: 12px/28px "Noto Sans", sans-serif; color: #444; }
.thumb { width: 100%; height: auto; background: #fff; border: 1px solid #777; }
.soft { fill: none; stroke: #ddd; }
.ax { fill: none; stroke: #999; }
.tiny { font: 5px "DejaVu Sans Condensed", "DejaVu Sans", sans-serif; fill: #222; }
.vbar { width: 20px; border-left: 1px solid #888; display: flex; flex-direction: column; background: #f4f4f4; }
.vbar button { height: 22px; border-bottom: 1px solid #888; background: #fff; display: flex; align-items: center; justify-content: center; }
.vbar .tri.up { border-width: 0 5px 6px; }
.track { flex: 1; }
.foot { height: 3px; border-top: 1px solid #888; background: #fff; }
.splitter { flex: none; width: 7px; border-right: 2px solid #eee; position: relative; margin-top: 28px; }
.splitter::before { content: ""; position: absolute; right: 0; top: 0; bottom: 0; width: 1px; background: #aaa; }

.docs { flex: 1; min-width: 0; display: flex; flex-direction: column; }
.doctabs { height: 32px; display: flex; padding-top: 1px; }
.doctab { flex: none; height: 27px; padding: 4px 20px 0 17px; display: flex; align-items: flex-start; font: 13px/20px "DejaVu Sans Condensed", "DejaVu Sans", sans-serif; }
.doctab:first-child { padding-left: 14px; }
.doctab span { margin: 2px 9px 0 5px; }
.doctab button { margin-top: 7px; }
.doctab.active { background: #fff; border: 1px solid #aaa; border-bottom: 0; padding-left: 16px; padding-top: 2px; }
.canvas { flex: 1; min-height: 0; overflow: hidden; border-top: 1px solid #777; border-left: 1px solid #777; }
.sheet { position: relative; margin: 13px 0 0 125px; border: 1px solid #aaa; border-right: 0; background: #fff; }
.shade { height: 10px; margin-left: 133px; background: #777; }
.plot text { font: 10px "DejaVu Sans Condensed", "DejaVu Sans", sans-serif; fill: #111; }
.frame { fill: none; stroke: #ccc; }
.frame.pale { stroke: #e2e2e2; }
.edge { fill: none; stroke: #e0e0e0; stroke-width: 2; }
.axis { fill: none; stroke: #444; stroke-width: 1; }
.tick { stroke: #333; fill: none; }
.handle { position: absolute; width: 11px; height: 11px; background: #0f0; border: 1px solid #2ab42a; }
.h-rot { left: 520px; top: -14px; }
.h-nw { left: 12px; top: 11px; }
.h-n { left: 520px; top: 11px; }
.h-w { left: 12px; top: 366px; }
.h-sw { left: 12px; top: 720px; }
.h-s { left: 520px; top: 720px; }
.hbar { flex: none; height: 5px; border-top: 1px solid #999; background: #ccc; }
.thumbbar { width: 35%; height: 4px; margin-left: 41%; background: #f6f6f6; border: solid #888; border-width: 0 1px; }

.menu { position: absolute; left: 0; top: 121px; width: 278px; padding: 2px 3px 1px; display: flex; flex-direction: column; background: #fdfdfd; border: 1px solid #999; border-left: 0; box-shadow: 2px 2px 2px rgba(0, 0, 0, .5); font-size: 14px; line-height: 22px; color: #3c3c3c; }
.item { position: relative; height: 24px; padding: 0 14px 0 41px; border: 1px solid transparent; display: flex; align-items: center; justify-content: space-between; text-align: left; white-space: nowrap; }
.item.tall { height: 26px; }
.item.off { color: #aaa; }
.item.hot { background: #c8c8c8; border-color: #e2b8b4; }
.item kbd { font: inherit; }
.mi { position: absolute; left: 4px; top: 2px; }
.q { font: bold 10px "DejaVu Sans", sans-serif; fill: #777; }
.menu hr { margin: 2px 2px 6px 30px; border: 0; border-top: 1px solid #ccc; height: 1px; }
</style>
